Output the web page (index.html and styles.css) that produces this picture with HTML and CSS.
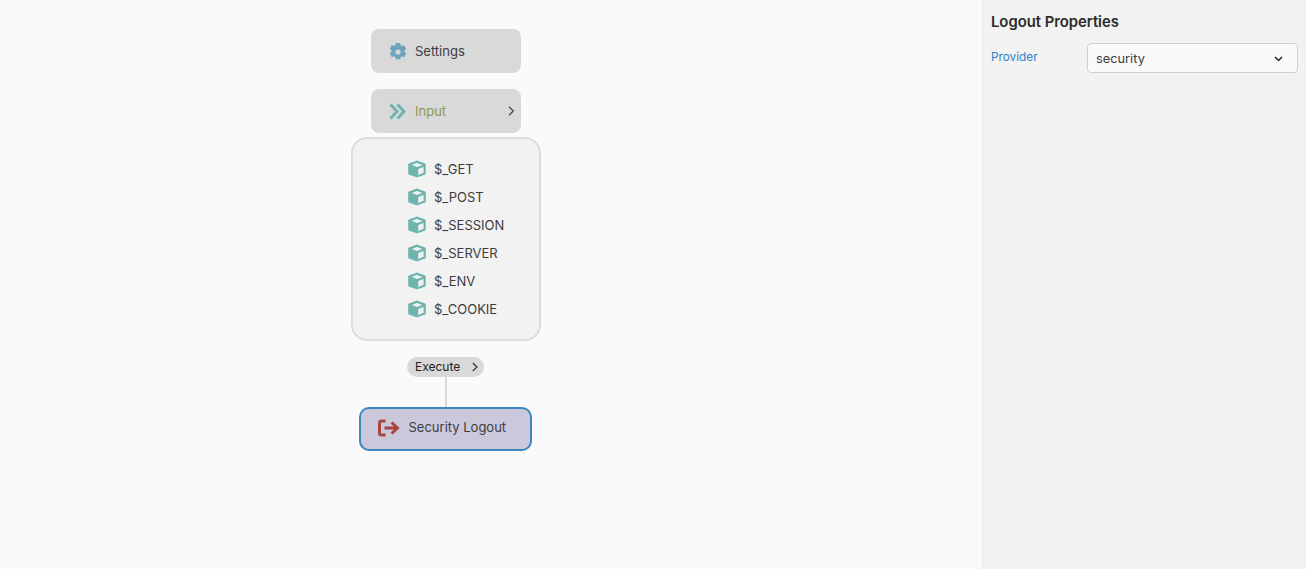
FILE: index.html
```html
<!DOCTYPE html>
<html lang="en">
<head>
<meta charset="utf-8">
<title>Logout Properties</title>
<link rel="stylesheet" href="styles.css">
</head>
<body>
<svg class="defs" width="0" height="0" aria-hidden="true">
  <symbol id="cube" viewBox="0 0 18 18">
    <path fill="#6fb5ad" d="M9 .4 17.200 3.600c.4.2.6.5.6.9v9c0 .4-.2.8-.6.9L9 17.600.8 14.400c-.4-.1-.6-.5-.6-.9v-9c0-.4.2-.7.6-.9z"/>
    <path fill="#f2f2f2" d="M9 3 14.300 5 9 7 3.700 5zM10.200 9l5.400-2v5.800l-5.400 2.200z"/>
  </symbol>
</svg>
<main class="app">
  <section class="canvas">
    <div class="flow">
      <div class="node node-settings">
        <svg class="node-icon" width="18" height="18" viewBox="0.8 0.4 16.400 17.200"><path fill="#6ea3bd" fill-rule="evenodd" d="M6.900.4h4.200l.5 2.300 1 .6 2.300-.8 2 3.500-1.700 1.600v1.200l1.700 1.600-2 3.500-2.300-.8-1 .6-.5 2.300H6.900l-.5-2.300-1-.6-2.300.8-2-3.500 1.700-1.600V7.400L1.100 5.800l2-3.500 2.300.8 1-.6zM9 6.500a2.500 2.500 0 1 0 0 5 2.500 2.500 0 0 0 0-5z"/></svg>
        <span>Settings</span>
      </div>
      <div class="node node-input">
        <svg class="node-icon" width="18" height="18" viewBox="0 0 18 18"><path fill="none" stroke="#6fb5ad" stroke-width="3" d="M1.500 2.500 8 9.500l-6.500 7M8.500 2.500 15 9.500l-6.500 7"/></svg>
        <span class="input-label">Input</span>
        <svg class="chev" width="7" height="10" viewBox="0 0 7 10"><path fill="none" stroke="#444" stroke-width="1.200" d="M1 .8 5.400 5 1 9.200"/></svg>
      </div>
      <div class="group">
        <div class="item"><svg width="18" height="18"><use href="#cube"/></svg><span>$_GET</span></div>
        <div class="item"><svg width="18" height="18"><use href="#cube"/></svg><span>$_POST</span></div>
        <div class="item"><svg width="18" height="18"><use href="#cube"/></svg><span>$_SESSION</span></div>
        <div class="item"><svg width="18" height="18"><use href="#cube"/></svg><span>$_SERVER</span></div>
        <div class="item"><svg width="18" height="18"><use href="#cube"/></svg><span>$_ENV</span></div>
        <div class="item"><svg width="18" height="18"><use href="#cube"/></svg><span>$_COOKIE</span></div>
      </div>
      <div class="pill">
        <span class="pill-label">Execute</span>
        <svg width="6" height="10" viewBox="0 0 6 10"><path fill="none" stroke="#333" stroke-width="1.200" d="M.8 1 5 5 .8 9"/></svg>
      </div>
      <div class="connector"></div>
      <div class="node node-logout">
        <svg width="22" height="18" viewBox="0 0 22 18"><path fill="none" stroke="#a8453f" stroke-width="3" d="M7.500 2H3.500Q1.500 2 1.500 4v10q0 2 2 2h4"/><path fill="none" stroke="#a8453f" stroke-width="3" d="M6.500 9h13M13.500 3.500 19.500 9l-6 5.500"/></svg>
        <span class="logout-label">Security Logout</span>
      </div>
    </div>
  </section>
  <aside class="panel">
    <h2 class="panel-title">Logout Properties</h2>
    <div class="field">
      <label class="field-label" for="provider">Provider</label>
      <div class="select" id="provider">
        <span>security</span>
        <svg class="select-arrow" width="9" height="6" viewBox="0 0 9 6"><path fill="none" stroke="#222" stroke-width="1.500" d="M1 1l3.500 3.500L8 1"/></svg>
      </div>
    </div>
  </aside>
</main>
</body>
</html>
```

FILE: styles.css
```css
* { box-sizing: border-box; }
html, body { margin: 0; height: 100%; }
body {
  font-family: Inter, "Liberation Sans", sans-serif;
  font-size: 13px;
  color: #3d3d3d;
  background: #fafafa;
  overflow: hidden;
}
.defs { position: absolute; }
.app { display: flex; height: 569px; }
.canvas { width: 982px; padding: 29px 0 0 351px; }
.flow { width: 190px; display: flex; flex-direction: column; align-items: center; }
.node {
  display: flex;
  align-items: center;
  height: 44px;
  border-radius: 8px;
  background: #d9d9d9;
}
.node-settings, .node-input { width: 150px; padding-left: 18px; }
.node-settings .node-icon { margin-top: 1px; }
.node-icon { margin-right: 8px; flex: none; }
.node-input { margin-top: 16px; }
.input-label { color: #8a9a4f; }
.chev { margin-left: auto; margin-right: 6px; }
.group {
  width: 190px;
  height: 204px;
  margin-top: 4px;
  padding: 16px 0 0 55px;
  border: 2px solid #dcdcdc;
  border-radius: 16px;
  background: #f2f2f2;
}
.item { display: flex; align-items: center; gap: 8px; height: 28px; }
.item svg { flex: none; }
.pill {
  display: flex;
  align-items: center;
  justify-content: space-between;
  width: 77px;
  height: 20px;
  margin: 16px 1px 0 0;
  padding: 0 6px 0 8px;
  border-radius: 10px;
  background: #d9d9d9;
  font-size: 12px;
  color: #222;
}
.pill-label { margin-bottom: 1px; }
.connector { width: 2px; height: 30px; background: #d9d9d9; }
.node-logout {
  width: 173px;
  gap: 8.500px;
  margin-right: 1px;
  padding: 0 0 2px 17px;
  border: 2px solid #3a87c0;
  border-radius: 10px;
  background: #cbc8dc;
}
.logout-label { margin-bottom: 2px; }
.panel {
  width: 324px;
  padding: 14px 8px 0 8px;
  border-left: 1px solid #e8e8e8;
  background: #f2f2f2;
}
.panel-title { margin: 0 0 12px; font-size: 14.8px; line-height: 17px; font-weight: 600; color: #2b2b2b; }
.field { display: flex; align-items: flex-start; }
.field-label { width: 96px; padding-top: 7px; font-size: 11.8px; line-height: 15px; color: #2f83c4; }
.select {
  display: flex;
  align-items: center;
  justify-content: space-between;
  width: 211px;
  height: 30px;
  padding: 0 14px 0 8px;
  border: 1px solid #cfcfcf;
  border-radius: 4px;
  background: #fafafa;
  font-size: 12.8px;
}
.select-arrow { margin-top: 2px; }
```
